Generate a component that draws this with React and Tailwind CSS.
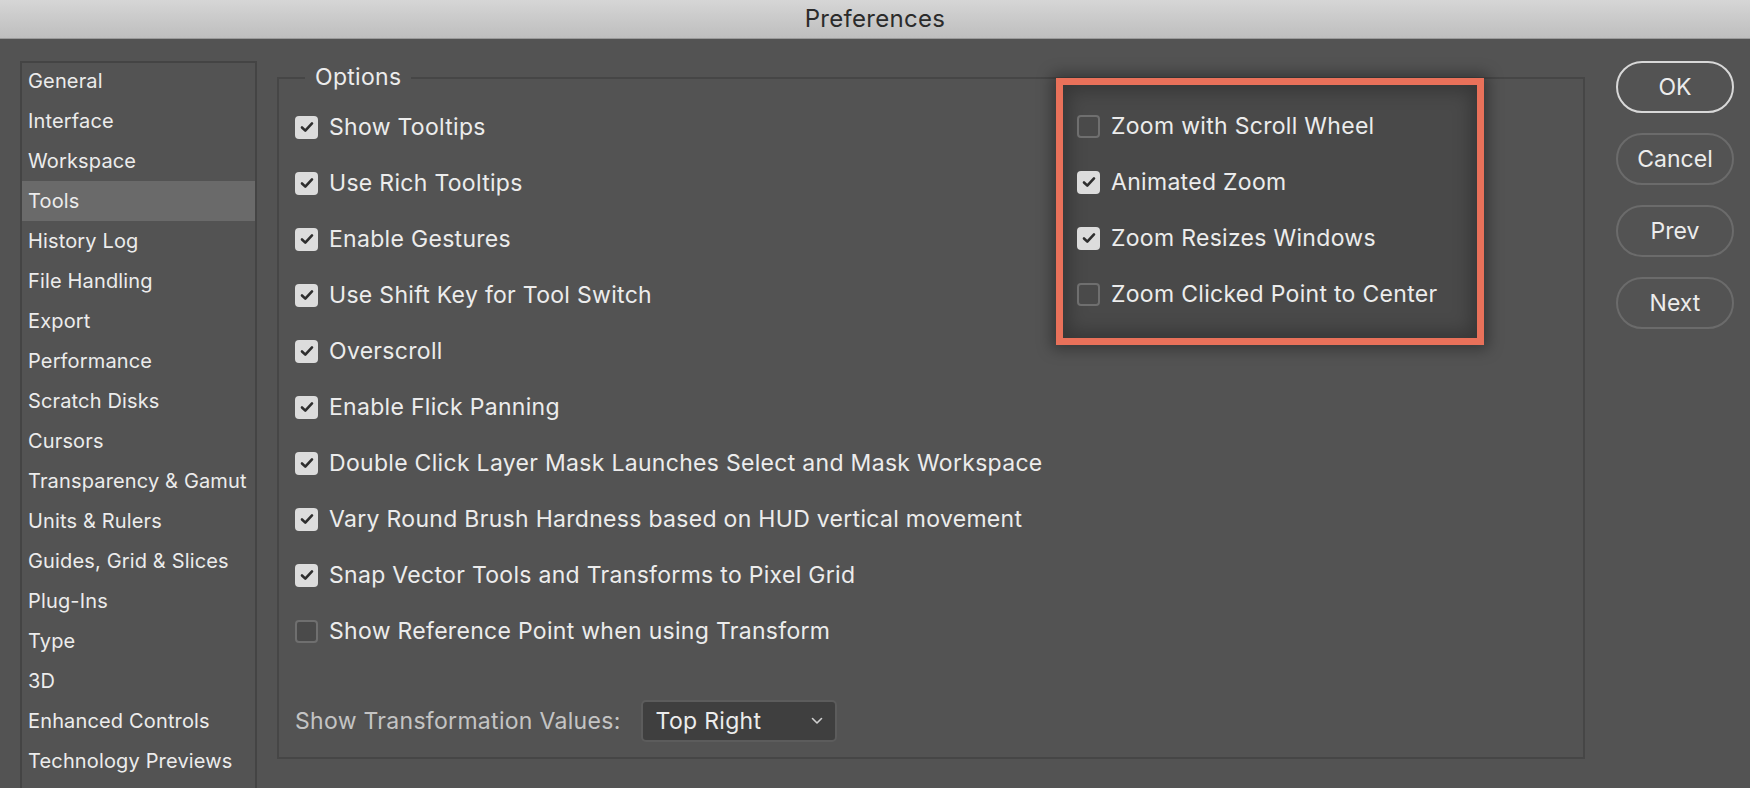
import React from 'react';

const sections = [
  "General", "Interface", "Workspace", "Tools", "History Log", "File Handling", "Export",
  "Performance", "Scratch Disks", "Cursors", "Transparency & Gamut", "Units & Rulers",
  "Guides, Grid & Slices", "Plug-Ins", "Type", "3D", "Enhanced Controls", "Technology Previews",
];

const leftOptions = [
  ["Show Tooltips", true],
  ["Use Rich Tooltips", true],
  ["Enable Gestures", true],
  ["Use Shift Key for Tool Switch", true],
  ["Overscroll", true],
  ["Enable Flick Panning", true],
  ["Double Click Layer Mask Launches Select and Mask Workspace", true],
  ["Vary Round Brush Hardness based on HUD vertical movement", true],
  ["Snap Vector Tools and Transforms to Pixel Grid", true],
  ["Show Reference Point when using Transform", false],
];

const zoomOptions = [
  ["Zoom with Scroll Wheel", false],
  ["Animated Zoom", true],
  ["Zoom Resizes Windows", true],
  ["Zoom Clicked Point to Center", false],
];

function Check({ checked }) {
  if (checked) {
    return (
      <span className="w-[23px] h-[23px] shrink-0 rounded-[4px] bg-[#dcdcdc] flex items-center justify-center">
        <svg width="14" height="12" viewBox="0 0 14 12">
          <path d="M2 6.5 L5.3 9.6 L12 2.4" fill="none" stroke="#2e2e2e" strokeWidth="2.6" strokeLinecap="round" strokeLinejoin="round" />
        </svg>
      </span>
    );
  }
  return <span className="w-[23px] h-[23px] shrink-0 rounded-[4px] border-2 border-[#6f6f6f] bg-[#4a4a4a]" />;
}

function Option({ label, checked }) {
  return (
    <div className="h-[56px] flex items-center gap-[11px]">
      <Check checked={checked} />
      <span className="text-[23px] text-[#ececec] tracking-[0.3px]">{label}</span>
    </div>
  );
}

function PillButton({ children, primary }) {
  return (
    <button
      className={
        "w-[118px] h-[52px] rounded-full border-2 text-[23px] text-[#ececec] flex items-center justify-center " +
        (primary ? "border-[#d8d8d8]" : "border-[#6b6b6b]")
      }
    >
      {children}
    </button>
  );
}

export default function App() {
  return (
    <div
      className="w-[1750px] h-[788px] bg-[#535353] overflow-hidden flex flex-col"
      style={{ fontFamily: "Inter, 'Noto Sans', sans-serif" }}
    >
      <div className="h-[39px] shrink-0 bg-gradient-to-b from-[#d6d6d6] to-[#bebebe] border-b border-[#9a9a9a] flex items-center justify-center">
        <span className="text-[24px] text-[#2b2b2b] tracking-[0.3px]">Preferences</span>
      </div>

      <div className="flex flex-row items-start">
        {/* sidebar */}
        <div className="ml-[20px] mt-[22px] w-[237px] h-[760px] shrink-0 border-2 border-[#444444]">
          <div className="-mt-[2px]">
            {sections.map((s) => (
              <div
                key={s}
                className={
                  "h-[40px] flex items-center pl-[6px] text-[20px] tracking-[0.15px] text-[#ececec] " +
                  (s === "Tools" ? "bg-[#6a6a6a]" : "")
                }
              >
                {s}
              </div>
            ))}
          </div>
        </div>

        {/* options group */}
        <div className="relative ml-[20px] mt-[38px] w-[1308px] h-[682px] shrink-0 border-2 border-[#464646] flex flex-row">
          <span className="absolute left-[26px] -top-[19px] px-[10px] bg-[#535353] text-[23px] tracking-[0.3px] text-[#ececec]">Options</span>

          <div className="w-[777px] pl-[16px] pt-[20px] flex flex-col">
            {leftOptions.map(([l, c]) => (
              <Option key={l} label={l} checked={c} />
            ))}
            <div className="mt-[34px] h-[56px] flex items-center gap-[20px]">
              <span className="text-[23px] tracking-[0.3px] text-[#c4c4c4]">Show Transformation Values:</span>
              <div className="w-[196px] h-[42px] rounded-[5px] border-2 border-[#5c5c5c] bg-[#3f3f3f] flex items-center justify-between pl-[13px] pr-[12px]">
                <span className="text-[23px] tracking-[0.3px] text-[#ececec]">Top Right</span>
                <svg width="12" height="8" viewBox="0 0 12 8">
                  <path d="M1.5 1.5 L6 6 L10.5 1.5" fill="none" stroke="#d0d0d0" strokeWidth="1.6" strokeLinecap="round" strokeLinejoin="round" />
                </svg>
              </div>
            </div>
          </div>

          <div className="w-[428px] h-[267px] mt-[-1px] border-[7px] border-[#e9715a] bg-[#494949] pl-[14px] pt-[13px] shadow-[0_0_14px_4px_rgba(0,0,0,0.35),inset_0_0_18px_6px_rgba(0,0,0,0.25)]">
            {zoomOptions.map(([l, c]) => (
              <Option key={l} label={l} checked={c} />
            ))}
          </div>
        </div>

        {/* buttons */}
        <div className="ml-[31px] mt-[22px] flex flex-col gap-[20px]">
          <PillButton primary>OK</PillButton>
          <PillButton>Cancel</PillButton>
          <PillButton>Prev</PillButton>
          <PillButton>Next</PillButton>
        </div>
      </div>
    </div>
  );
}
